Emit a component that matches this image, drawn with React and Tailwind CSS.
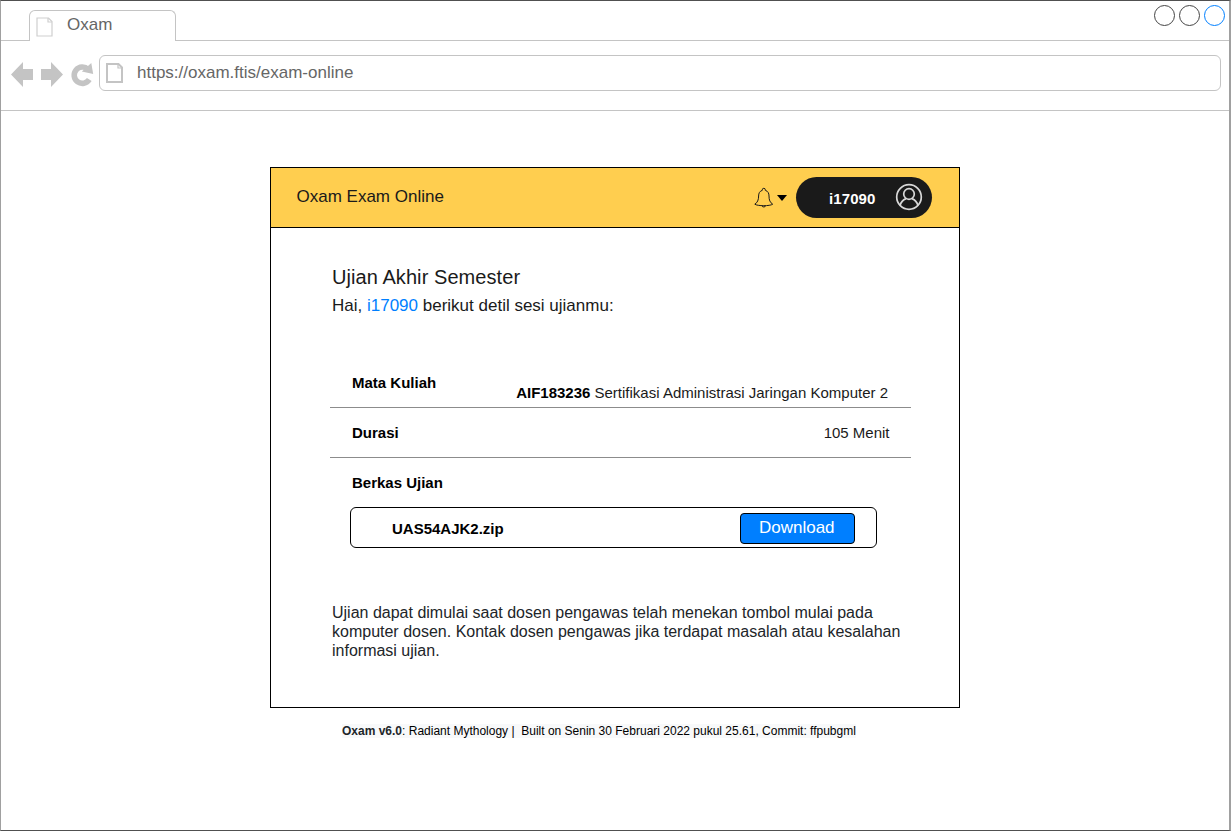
const font = "font-['Liberation_Sans',Arial,sans-serif]";

function PageIcon({ className, stroke, width }) {
  return (
    <svg className={className} viewBox="0 0 17 20" fill="none" stroke={stroke} strokeWidth={width}>
      <path d="M1 1H12.500L16 4.500V19H1Z" />
      <path d="M12 1V5H16" strokeWidth="1.2" />
    </svg>
  );
}

function TabStrip() {
  return (
    <div className="flex h-10 shrink-0">
      <div className="w-7 border-b border-[#c4c4c4]" />
      <div className="mt-[9px] flex w-[147px] rounded-t-[6px] border border-b-0 border-[#c4c4c4] pl-[6px] pt-[6px]">
        <PageIcon className="h-5 w-[17px]" stroke="#cfcfcf" width="1.2" />
        <span className="-mt-px ml-[14px] text-[17px] leading-[17px] text-[#666666]">Oxam</span>
      </div>
      <div className="flex flex-1 justify-end gap-1 border-b border-[#c4c4c4] pr-[4px] pt-[4px]">
        <div className="size-[21px] rounded-full border border-[#444444]" />
        <div className="size-[21px] rounded-full border border-[#444444]" />
        <div className="size-[21px] rounded-full border border-[#007fff]" />
      </div>
    </div>
  );
}

function AddressBar() {
  return (
    <div className="flex h-[70px] shrink-0 border-b border-[#c4c4c4] pl-[10px] pt-[14px]">
      <svg className="mt-[7px] h-[25px] w-[83px]" viewBox="11 62 83 25" fill="#c4c4c4">
        <path d="M11 74.5L23 62V69H33V80H23V87Z" />
        <path d="M63 74.5L51 62V69H41V80H51V87Z" />
        <path d="M88 69.200A8.200 8.200 0 1 0 89.300 79.600" fill="none" stroke="#c4c4c4" strokeWidth="5.600" />
        <path d="M91.300 63L93.200 74L81.800 71.600Z" />
      </svg>
      <div className="ml-[5px] flex h-9 w-[1122px] rounded-[6px] border border-[#c4c4c4] pl-[6px]">
        <PageIcon className="mt-[7px] h-5 w-[17px]" stroke="#c4c4c4" width="2" />
        <span className="ml-[14px] mt-[8px] text-[17px] leading-[17px] text-[#666666]">https://oxam.ftis/exam-online</span>
      </div>
    </div>
  );
}

function CardHeader() {
  return (
    <div className="flex h-[60px] border-b border-black bg-[#ffce4f] pl-[25.5px]">
      <span className="w-[457.5px] pt-[20px] text-[17px] leading-[17px] text-[#1a1a1a]">Oxam Exam Online</span>
      <svg className="mt-[19px] h-[22px] w-[33px]" viewBox="754 187 33 22" fill="none" stroke="#1a1a1a" strokeWidth="1">
        <path d="M762.300 190.300V189.800A1.500 1.500 0 0 1 765.300 189.800V190.300C768 191.200 769 193.300 769 196C769 200 770 202.500 772.700 204.200C770 206.200 757.500 206.200 754.800 204.200C757.500 202.500 758.600 200 758.600 196C758.600 193.300 759.600 191.200 762.300 190.300Z" />
        <path d="M762 206A2 1.700 0 0 0 765.600 206" />
        <path d="M777 195H787L782 201Z" fill="#000" stroke="none" />
      </svg>
      <div className="ml-[8.5px] mt-[9px] flex h-[41px] w-[136.5px] rounded-full bg-[#1a1a1a] pl-[33.5px] text-white">
        <span className="w-[66px] pt-[14px] text-[15px] font-bold leading-[15px] tracking-[0.1px]">i17090</span>
        <svg className="mt-[6px] size-[28px]" viewBox="0 0 28 28" fill="none" stroke="#d8d8d8" strokeWidth="1.7">
          <circle cx="14" cy="14" r="12.300" />
          <circle cx="14" cy="11" r="5.300" />
          <path d="M5 22.500C6 18.800 8.200 16.800 11 15.600M23 22.500C22 18.800 19.800 16.800 17 15.600" />
        </svg>
      </div>
    </div>
  );
}

function Details() {
  return (
    <div className="ml-[59px] mt-[47px] w-[581px] text-[15px] leading-[15px]">
      <div className="flex h-[47px] justify-between border-b border-[#8c8c8c] pl-[22px] pr-[23px]">
        <b className="pt-[14px]">Mata Kuliah</b>
        <span className="pt-[24px] text-[#1a1a1a]"><b className="text-black">AIF183236</b> Sertifikasi Administrasi Jaringan Komputer 2</span>
      </div>
      <div className="flex h-[50px] justify-between border-b border-[#8c8c8c] pl-[22px] pr-[21.5px] pt-[17px]">
        <b>Durasi</b>
        <span className="text-[#1a1a1a]">105 Menit</span>
      </div>
      <div className="h-[49px] pl-[22px] pt-[17px]">
        <b>Berkas Ujian</b>
      </div>
      <div className="ml-5 flex h-[41px] w-[527px] justify-between rounded-[6px] border border-black pl-[41px] pr-[21px] pt-[5px]">
        <b className="pt-[8px]">UAS54AJK2.zip</b>
        <button className="flex h-[31px] w-[115px] justify-center rounded-[4px] border border-black bg-[#007fff] pr-[1.5px] pt-[5px] text-[17px] leading-[17px] text-white">Download</button>
      </div>
    </div>
  );
}

export default function App() {
  return (
    <div className={`${font} h-[832px] w-[1232px] overflow-hidden bg-white`}>
      <div className="flex h-[831px] w-[1231px] flex-col border border-r-2 border-b-[#505050] border-l-[#a0a0a0] border-r-[#a0a0a0] border-t-[#505050]">
        <TabStrip />
        <AddressBar />
        <main className="ml-[269px] mt-14 w-[690px]">
          <section className="h-[541px] border border-black">
            <CardHeader />
            <h1 className="ml-[61px] mt-[39px] text-[20px] leading-[20px] tracking-[0.07px] text-[#1a1a1a]">Ujian Akhir Semester</h1>
            <p className="ml-[61px] mt-[10px] text-[17px] leading-[17px] text-[#1a1a1a]">
              Hai, <span className="text-[#007fff]">i17090</span> berikut detil sesi ujianmu:
            </p>
            <Details />
            <p className="ml-[61px] mt-[55px] w-[590px] text-[16px] leading-[19px] text-[#212529]">
              Ujian dapat dimulai saat dosen pengawas telah menekan tombol mulai pada<br />
              komputer dosen. Kontak dosen pengawas jika terdapat masalah atau kesalahan<br />
              informasi ujian.
            </p>
          </section>
          <footer className="ml-[72px] mt-4 text-[12px] leading-[14px] text-black">
            <span className="whitespace-pre bg-[#f8f9fa]"><b className="text-[#212529]">Oxam v6.0</b>: Radiant Mythology |  Built on Senin 30 Februari 2022 pukul 25.61, Commit: ffpubgml</span>
          </footer>
        </main>
      </div>
    </div>
  );
}
